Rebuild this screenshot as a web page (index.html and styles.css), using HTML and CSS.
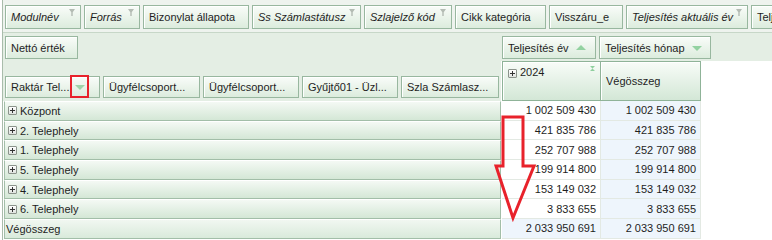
FILE: index.html
```html
<!DOCTYPE html>
<html lang="hu">
<head>
    <meta charset="UTF-8">
    <title>Pivot - Nettó érték</title>
    <link rel="stylesheet" href="styles.css">
</head>
<body>
    <div class="pivot">
        <div class="filters">
            <div class="fld it w-modul">Modulnév<span class="funnel"></span></div>
            <div class="fld it w-forras">Forrás<span class="funnel"></span></div>
            <div class="fld w-biz">Bizonylat állapota</div>
            <div class="fld it w-ss">Ss Számlastátusz<span class="funnel"></span></div>
            <div class="fld it w-szla">Szlajelző kód<span class="funnel"></span></div>
            <div class="fld w-cikk">Cikk kategória</div>
            <div class="fld w-vissza">Visszáru_e</div>
            <div class="fld it w-telj">Teljesítés aktuális év<span class="funnel"></span></div>
            <div class="fld w-rest">Teljesítés hónap</div>
        </div>

        <div class="head">
            <div class="head-left">
                <div class="data-area">
                    <div class="fld w-netto">Nettó érték</div>
                </div>
                <div class="row-fields">
                    <div class="fld w-raktar">Raktár Tel...<span class="drop marked"></span></div>
                    <div class="fld w-ugy1">Ügyfélcsoport...</div>
                    <div class="fld w-ugy2">Ügyfélcsoport...</div>
                    <div class="fld w-gyujto">Gyűjtő01 - Üzl...</div>
                    <div class="fld w-szlasz">Szla Számlasz...</div>
                </div>
            </div>
            <div class="head-right">
                <div class="col-fields">
                    <div class="fld w-ev">Teljesítés év<span class="sort up"></span></div>
                    <div class="fld w-honap">Teljesítés hónap<span class="sort down"></span></div>
                </div>
                <div class="col-heads">
                    <div class="chead top"><span class="exp"></span>2024<span class="sigma"></span></div>
                    <div class="chead mid">Végösszeg</div>
                </div>
            </div>
        </div>

        <div class="rows">
            <div class="rhead"><span class="exp"></span>Központ</div>
            <div class="cell">1 002 509 430</div>
            <div class="cell tot">1 002 509 430</div>

            <div class="rhead"><span class="exp"></span>2. Telephely</div>
            <div class="cell">421 835 786</div>
            <div class="cell tot">421 835 786</div>

            <div class="rhead"><span class="exp"></span>1. Telephely</div>
            <div class="cell">252 707 988</div>
            <div class="cell tot">252 707 988</div>

            <div class="rhead"><span class="exp"></span>5. Telephely</div>
            <div class="cell">199 914 800</div>
            <div class="cell tot">199 914 800</div>

            <div class="rhead"><span class="exp"></span>4. Telephely</div>
            <div class="cell">153 149 032</div>
            <div class="cell tot">153 149 032</div>

            <div class="rhead"><span class="exp"></span>6. Telephely</div>
            <div class="cell">3 833 655</div>
            <div class="cell tot">3 833 655</div>

            <div class="rhead grand">Végösszeg</div>
            <div class="cell tot">2 033 950 691</div>
            <div class="cell tot">2 033 950 691</div>
        </div>
    </div>

    <svg class="overlay" width="772" height="240" viewBox="0 0 772 240">
        <polygon points="503,117 523,117 523,166 534,166 513,218 496,166 503,166"
                 fill="none" stroke="#e8222b" stroke-width="3" stroke-linejoin="miter"/>
    </svg>
</body>
</html>
```

FILE: styles.css
```css
body {
    margin: 0;
    position: relative;
    width: 772px;
    height: 240px;
    overflow: hidden;
    background: #fff;
    font-family: "Liberation Sans", Arial, sans-serif;
    font-size: 11px;
    color: #1e1e1e;
}
.pivot {
    margin-left: 2px;
    border-left: 1px solid #a9bcab;
    height: 240px;
}

/* field buttons */
.fld {
    flex: none;
    position: relative;
    box-sizing: border-box;
    height: 24px;
    padding: 0 5px;
    display: flex;
    align-items: center;
    white-space: nowrap;
    overflow: hidden;
    border: 1px solid #98b79f;
    background: linear-gradient(#f9fcf9, #dcecdd);
    box-shadow: inset 1px 1px 0 #fff;
}
.fld.it {
    font-style: italic;
}
.funnel {
    position: absolute;
    right: 5px;
    top: 3px;
    width: 6px;
    height: 7px;
    background: #b4bcb4;
    clip-path: polygon(0 0, 100% 0, 62% 45%, 62% 100%, 38% 100%, 38% 45%);
}

.filters {
    display: flex;
    gap: 3px;
    height: 33px;
    box-sizing: border-box;
    padding: 5px 0 0 2px;
    overflow: hidden;
    background: #eef3ee;
    border-bottom: 1px solid #c7d7c8;
}
.w-modul { width: 76px; }
.w-forras { width: 56px; }
.w-biz { width: 106px; }
.w-ss { width: 109px; }
.w-szla { width: 88px; }
.w-cikk { width: 91px; }
.w-vissza { width: 74px; }
.w-telj { width: 122px; }
.w-rest { width: 60px; }

.head {
    display: flex;
    height: 68px;
    background: #e4eee4;
}
.head-left {
    width: 498px;
    flex: none;
}
.data-area {
    padding: 3px 0 0 2px;
    height: 40px;
}
.w-netto { width: 73px; height: 23px; }
.row-fields {
    display: flex;
    gap: 3px;
    padding-left: 2px;
}
.row-fields .fld { height: 22px; }
.w-raktar { width: 95px; overflow: visible; }
.w-ugy1 { width: 97px; }
.w-ugy2 { width: 96px; }
.w-gyujto { width: 96px; }
.w-szlasz { width: 98px; }

.drop {
    position: absolute;
    left: 64px;
    top: -2px;
    width: 15px;
    height: 19px;
    border: 2px solid #e8222b;
}
.drop::after {
    content: "";
    position: absolute;
    left: 3px;
    top: 8px;
    border-left: 5px solid transparent;
    border-right: 5px solid transparent;
    border-top: 5px solid #9fd4aa;
}

.head-right {
    flex: 1;
}
.col-fields {
    display: flex;
    gap: 3px;
    padding: 3px 0 0 1px;
    height: 25px;
}
.col-fields .fld { height: 23px; }
.w-ev { width: 94px; }
.w-honap { width: 112px; }
.sort {
    margin-left: 7px;
    border-left: 5px solid transparent;
    border-right: 5px solid transparent;
}
.sort.up { border-bottom: 5px solid #93d2a1; }
.sort.down { border-top: 5px solid #93d2a1; margin-top: 2px; }

.col-heads {
    display: flex;
    height: 40px;
    background: #fff;
}
.chead {
    box-sizing: border-box;
    height: 40px;
    border: 1px solid #8fb398;
    background: linear-gradient(#f8fcf8, #d3e7d6);
    box-shadow: inset 1px 1px 0 #fff;
    position: relative;
}
.chead.top {
    width: 99px;
    margin-left: 1px;
    padding: 4px 0 0 5px;
    display: flex;
    align-items: flex-start;
}
.chead.mid {
    width: 100px;
    border-left: none;
    display: flex;
    align-items: center;
    padding-left: 5px;
}
.sigma {
    position: absolute;
    right: 5px;
    top: 4px;
    width: 5px;
    height: 5px;
    background: #8fcf9e;
    clip-path: polygon(0 0, 100% 0, 50% 50%, 100% 100%, 0 100%, 50% 50%);
}

/* expand box */
.exp {
    flex: none;
    position: relative;
    box-sizing: border-box;
    width: 9px;
    height: 9px;
    margin-right: 3px;
    border: 1px solid #8b938b;
    border-radius: 1px;
    background: linear-gradient(#fff, #dfe3df);
}
.chead .exp { margin-top: 3px; }
.exp::before,
.exp::after {
    content: "";
    position: absolute;
    background: #333;
}
.exp::before { left: 1px; top: 3px; width: 5px; height: 1px; }
.exp::after { left: 3px; top: 1px; width: 1px; height: 5px; }

/* body rows */
.rows {
    display: grid;
    grid-template-columns: 499px 99px 100px;
    grid-auto-rows: 19.7px;
}
.rhead {
    box-sizing: border-box;
    margin: 0 1px;
    padding-left: 3px;
    display: flex;
    align-items: center;
    border: 1px solid #a2bea8;
    border-top-color: #fff;
    background: linear-gradient(#f4f9f4, #d4e7d6);
}
.rhead.grand {
    padding-left: 1px;
    background: linear-gradient(#f1f7f1, #d9eadb);
}
.cell {
    box-sizing: border-box;
    padding-right: 4px;
    display: flex;
    align-items: center;
    justify-content: flex-end;
    border-bottom: 1px solid #e3e9e3;
    border-right: 1px solid #e3e9e3;
    background: #fff;
}
.cell.tot {
    background: #eef5fc;
}

.overlay {
    position: absolute;
    left: 0;
    top: 0;
    pointer-events: none;
}
```
